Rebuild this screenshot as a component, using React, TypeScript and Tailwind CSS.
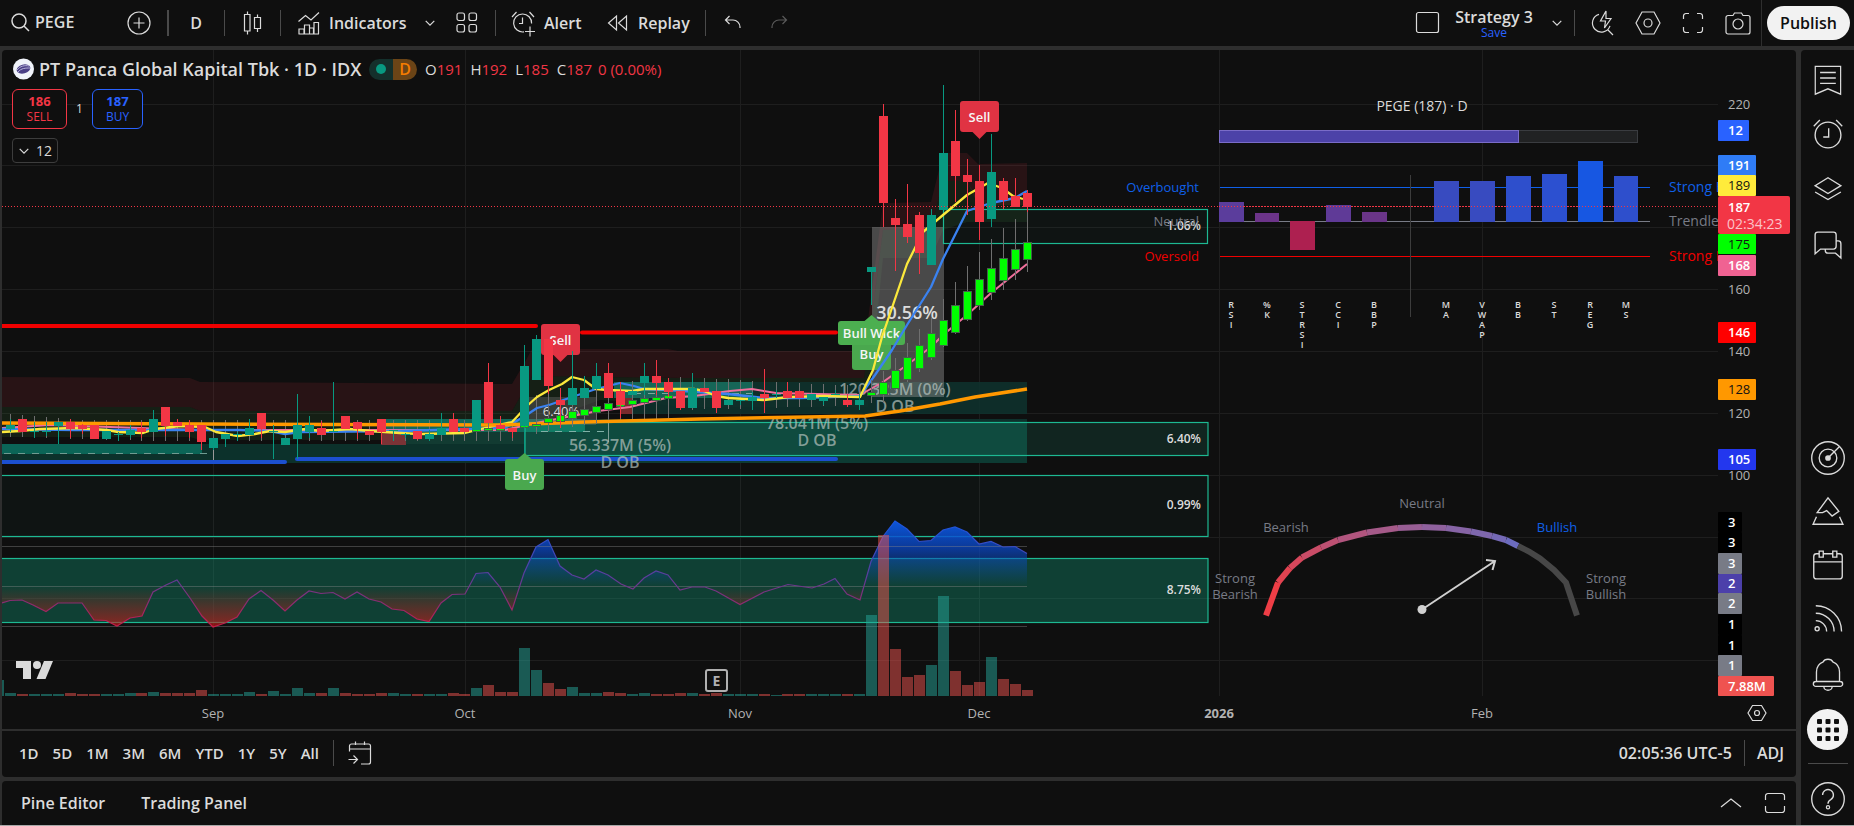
import React from "react";

const FONT = "font-['Trebuchet_MS','Open_Sans','Noto_Sans',sans-serif]";

/* ------------------------------------------------------------------ icons */

type IconProps = { size?: number; className?: string; children: React.ReactNode };

function Icon({ size = 28, className = "", children }: IconProps) {
  return (
    <svg
      width={size}
      height={size}
      viewBox="0 0 28 28"
      fill="none"
      stroke="currentColor"
      strokeWidth="1.2"
      className={"shrink-0 " + className}
      aria-hidden="true"
    >
      {children}
    </svg>
  );
}

const SearchIcon = () => (
  <Icon>
    <circle cx="13" cy="13" r="7" strokeWidth="1.5" />
    <path d="M18 18l5 5" strokeWidth="1.5" />
  </Icon>
);
const PlusCircle = () => (
  <Icon>
    <circle cx="14" cy="14" r="11" />
    <path d="M14 8.500v11M8.500 14h11" />
  </Icon>
);
const CandlesIcon = () => (
  <Icon>
    <path d="M8.500 2.500v3M8.500 22v3.500M5.500 5.500h5.500v16.500h-5.500zM18.500 5.500v3M18.500 19.500v3.500M15.500 8.500h6v11h-6z" />
  </Icon>
);
const IndicatorsIcon = () => (
  <Icon>
    <path d="M3.500 12.500l7-6 5.500 4.500 8-7.500M4 25v-5h5v5M9.500 25v-9h5v9M14.500 25v-6h4v6M19 25v-11.500h4.500V25M3.500 25h20.500" />
  </Icon>
);
const GridIcon = () => (
  <Icon>
    <rect x="4" y="4" width="7.500" height="7.500" rx="2" />
    <rect x="16" y="4" width="7.500" height="7.500" rx="2" />
    <rect x="4" y="15.500" width="7.500" height="7.500" rx="2" />
    <rect x="16" y="15.500" width="7.500" height="7.500" rx="2" />
  </Icon>
);
const AlertIcon = () => (
  <Icon>
    <path d="M21.600 14.500a9 9 0 1 0-7.600 8.400M12.500 8.500v6H9M20 17.500v10M15 22.500h10M2 8l4.500-5M19.500 3L24 8" />
  </Icon>
);
const ReplayIcon = () => (
  <Icon>
    <path d="M12.500 7v14l-8-7zM22.500 7v14l-8-7z" />
  </Icon>
);
const UndoIcon = () => (
  <Icon>
    <path d="M10.500 7L6.500 11l4 4M6.500 11h7.500a7 7 0 0 1 7 7v1" />
  </Icon>
);
const RedoIcon = () => (
  <Icon>
    <path d="M17.500 7l4 4-4 4M21.500 11H14a7 7 0 0 0-7 7v1" />
  </Icon>
);
const ChevronDown = () => (
  <Icon size={20}>
    <path d="M8 11l6 6 6-6" strokeWidth="1.7" />
  </Icon>
);
const FlashSearch = () => (
  <Icon>
    <path d="M11 5.400a9 9 0 1 0 11 11.500M20 21l5 5M18 2l-5.500 10h5l-1 7L23 9.500h-5z" />
  </Icon>
);
const HexIcon = ({ size = 28 }: { size?: number }) => (
  <Icon size={size}>
    <path d="M8 3h12l6 11-6 11H8L2 14z" />
    <circle cx="14" cy="14" r="4" />
  </Icon>
);
const FullscreenIcon = () => (
  <Icon>
    <path d="M4.500 10V7a2.500 2.500 0 0 1 2.500-2.500h3M18 4.500h3A2.500 2.500 0 0 1 23.500 7v3M23.500 18v3a2.500 2.500 0 0 1-2.500 2.500h-3M10 23.500H7A2.500 2.500 0 0 1 4.500 21v-3" />
  </Icon>
);
const CameraIcon = () => (
  <Icon>
    <path d="M4 6.500h5l1.500-2.500h7L19 6.500h5a2 2 0 0 1 2 2V23a2 2 0 0 1-2 2H4a2 2 0 0 1-2-2V8.500a2 2 0 0 1 2-2z" />
    <circle cx="14" cy="15" r="5" />
  </Icon>
);

const S = 38;
const SIDE_TOP: { label: string; icon: React.ReactNode }[] = [
  {
    label: "Watchlist",
    icon: (
      <Icon size={S}>
        <path d="M3.500 4h21v20.500l-10.500-4-10.500 4zM7.500 8.500h13M7.500 12.500h13M7.500 16.500h13" strokeWidth="1" transform="translate(1.500 0) scale(0.890 1)" />
      </Icon>
    ),
  },
  {
    label: "Alerts",
    icon: (
      <Icon size={S}>
        <circle cx="14" cy="14" r="9.500" strokeWidth="1" />
        <path d="M14.500 9v6.500h-4M3.500 7.500L8 3M20 3l4.500 4.500" strokeWidth="1" />
      </Icon>
    ),
  },
  {
    label: "Object tree",
    icon: (
      <Icon size={S}>
        <path d="M14 5l9.500 5.800-9.500 5.800-9.500-5.800zM4.500 15.500L14 21l9.500-5.500" strokeWidth="1" />
      </Icon>
    ),
  },
  {
    label: "Chats",
    icon: (
      <Icon size={S}>
        <path
          d="M6.500 4.500h11.500a2 2 0 0 1 2 2V15a2 2 0 0 1-2 2H8.500L4.500 20.500V6.500a2 2 0 0 1 2-2zM20 11h1.500a2 2 0 0 1 2 2v10.500l-4-3.500H14a2 2 0 0 1-2-2v-1"
          strokeWidth="1"
        />
      </Icon>
    ),
  },
];

const SIDE_BOTTOM: { label: string; icon: React.ReactNode }[] = [
  {
    label: "Screeners",
    icon: (
      <Icon size={S}>
        <circle cx="14" cy="14" r="12" strokeWidth="1" />
        <circle cx="14" cy="14" r="6.500" strokeWidth="1" />
        <circle cx="14" cy="14" r="1.500" fill="currentColor" />
        <path d="M14 14l8.500-8.500" strokeWidth="1" />
      </Icon>
    ),
  },
  {
    label: "Pine",
    icon: (
      <Icon size={S}>
        <path d="M6 14.500L14 3.500l8 10-5 3.500-4-4-3 1.500zM5.500 17.500L3 23h22L22.500 17.500" strokeWidth="1" />
      </Icon>
    ),
  },
  {
    label: "Calendar",
    icon: (
      <Icon size={S}>
        <path d="M7.500 5H5.500a2 2 0 0 0-2 2v14.500a2 2 0 0 0 2 2h17a2 2 0 0 0 2-2V7a2 2 0 0 0-2-2h-2M10.500 5h7M3.500 11h21M7.500 3h3v4.500h-3zM17.500 3h3v4.500h-3z" strokeWidth="1" />
      </Icon>
    ),
  },
  {
    label: "News feed",
    icon: (
      <Icon size={S}>
        <circle cx="6" cy="20.500" r="1.500" strokeWidth="1" />
        <path d="M5 14.500a8 8 0 0 1 8 8M5 9A13.500 13.500 0 0 1 18.500 22.500M5 3.500a19 19 0 0 1 19 19" strokeWidth="1" />
      </Icon>
    ),
  },
  {
    label: "Notifications",
    icon: (
      <Icon size={S}>
        <path
          d="M5.500 19.500v-7a8 8 0 0 1 5-7.500C11.500 2.500 16.500 2.500 17.500 5a8 8 0 0 1 5 7.500v7M5 19.500h18a1.800 1.800 0 0 1 0 3.600H5a1.800 1.800 0 0 1 0-3.600zM11 23.500a3 2.500 0 0 0 6 0"
          strokeWidth="1"
        />
      </Icon>
    ),
  },
];

/* ------------------------------------------------------------- chart data */

const X = (n: number) => Math.floor(10.4 + 11.963 * n);
const GREEN = "#089981";
const RED = "#f23645";

// [up, wick top, body top, body bottom, wick bottom]
type Bar = [0 | 1, number, number, number, number];
const BARS: Bar[] = [
  [1, 419, 425, 429, 432], [0, 419, 419, 432, 432], [1, 422, 431, 432, 438], [1, 422, 431, 432, 436],
  [1, 422, 422, 426, 444], [0, 419, 422, 429, 438], [0, 424, 425, 429, 434], [0, 425, 425, 439, 439],
  [1, 431, 431, 439, 439], [1, 432, 434, 435, 441], [1, 425, 430, 435, 438], [0, 422, 428, 432, 438],
  [1, 410, 419, 432, 432], [0, 407, 407, 426, 436], [0, 419, 422, 426, 426], [0, 420, 425, 432, 438],
  [0, 425, 425, 442, 450], [1, 438, 438, 448, 450], [1, 434, 434, 439, 447], [1, 432, 434, 435, 441],
  [1, 419, 428, 435, 435], [0, 413, 413, 429, 438], [1, 425, 431, 432, 459], [1, 438, 438, 445, 445],
  [1, 394, 425, 439, 459], [1, 416, 425, 432, 438], [0, 421, 428, 435, 435], [1, 382, 431, 432, 432],
  [0, 416, 416, 429, 429], [0, 422, 422, 429, 439], [0, 431, 431, 435, 435], [0, 419, 419, 432, 444],
  [1, 430, 430, 431, 441], [1, 433, 434, 435, 438], [0, 431, 431, 439, 440], [1, 430, 434, 439, 441],
  [1, 413, 428, 435, 435], [0, 413, 419, 432, 432], [0, 428, 428, 432, 432], [1, 400, 400, 430, 430],
  [0, 363, 382, 423, 423], [0, 416, 425, 429, 429], [0, 428, 428, 432, 438], [1, 345, 366, 426, 454],
  [1, 335, 339, 380, 380], [0, 339, 339, 386, 394], [0, 388, 400, 405, 428], [1, 351, 388, 405, 405],
  [1, 376, 388, 398, 398], [1, 363, 376, 389, 389], [0, 363, 373, 398, 398], [0, 382, 391, 405, 418],
  [1, 391, 391, 395, 395], [1, 363, 376, 383, 395], [0, 360, 376, 383, 395], [0, 378, 382, 392, 397],
  [0, 391, 391, 408, 410], [1, 373, 388, 408, 408], [0, 388, 388, 392, 392], [0, 391, 391, 408, 413],
  [1, 400, 400, 405, 405], [1, 400, 400, 401, 405], [1, 392, 397, 401, 410], [0, 369, 394, 398, 413],
  [1, 390, 394, 395, 398], [0, 382, 391, 398, 398], [0, 391, 391, 398, 398], [1, 394, 394, 400, 400],
  [1, 397, 397, 401, 405], [1, 390, 394, 395, 395], [0, 394, 400, 405, 407], [1, 394, 400, 405, 410],
  [1, 267, 267, 272, 305], [0, 104, 116, 203, 227], [0, 199, 218, 225, 271], [0, 184, 224, 237, 243],
  [0, 212, 215, 253, 274], [1, 209, 215, 265, 265], [1, 85, 153, 210, 210], [0, 110, 141, 176, 202],
  [0, 159, 175, 182, 215], [0, 165, 181, 222, 240], [1, 134, 172, 219, 227], [0, 178, 181, 200, 209],
  [0, 178, 196, 207, 207], [0, 190, 193, 207, 212],
];

// [bar index, wick top, body top, body bottom, wick bottom]
const TREND: [number, number, number, number, number][] = [
  [38, 420, 430, 431, 440], [39, 425, 430, 431, 438], [40, 420, 429, 430, 437], [41, 420, 429, 430, 437],
  [43, 420, 426, 427, 434], [44, 412, 425, 426, 434], [45, 405, 419, 422, 431], [46, 402, 416, 421, 428],
  [47, 396, 412, 418, 427], [48, 376, 410, 415, 424], [49, 388, 407, 412, 424], [50, 388, 404, 409, 420],
  [51, 382, 405, 406, 414], [52, 381, 401, 404, 416], [53, 380, 399, 402, 415], [54, 385, 398, 400, 414],
  [55, 378, 396, 398, 411], [72, 380, 393, 395, 403], [73, 371, 383, 394, 403], [74, 358, 371, 388, 391],
  [75, 343, 358, 379, 382], [76, 329, 346, 368, 372], [77, 317, 334, 357, 360], [78, 299, 321, 345, 347],
  [79, 282, 306, 332, 334], [80, 266, 292, 319, 321], [81, 252, 280, 305, 310], [82, 239, 269, 292, 300],
  [83, 228, 259, 280, 290], [84, 219, 250, 269, 280], [85, 207, 243, 259, 272],
];

const VOLUME =
  "3g 2r 2g 2g 2g 3r 2r 2r 2g 2g 3g 3r 4g 3r 3r 3r 6r 2g 2g 2g 4g 2r 5g 2g 8g 3g 3r 8g 3r 2r 2r 3r 3g 2g 2r 2g 2g 3r 2r 8g 11r 4r 4r 48g 26g 13r 7r 9g 3g 3g 4r 3r 2g 3g 2r 2r 3r 3g 2r 3r 2g 2g 2g 2r 1g 2r 2r 2g 2g 2g 2r 2g 81g 161r 47r 19r 21r 31g 100g 25r 11r 14r 39g 17r 12r 6r".split(
    " ",
  );

const OSC =
  "2,603 10,600.5 22,600 33,605 46,611.5 58,603 82,603 94,620 106,620.5 117,626 130,618 142,616 153,592 166,585 177,580 190,598 202,616 213,627 225,623 237,617 249,599 261,590.5 273,600 285,611 297,600 309,591 321,593.5 333,592.5 345,599 357,592 369,599 381,602 392,609 404,610.5 417,619 429,621.5 441,603 452,594.5 465,594 476,573.5 488,572.5 500,587 512,610 524,573 536,547 548,539.5 560,566 572,575 584,579 596,570 608,575 621,584 633,589 644,578 656,571 668,575 680,590 692,587 705,587 716,591 740,604.5 764,592 788,584.5 812,588 824,584 835,578.5 847,594 860,600 871,561.5 883,536.5 895,521 907,529 919,541.5 931,540.5 943,530 955,527 967,532 979,544 991,541.5 1003,547 1015,546.5 1027,553.5";

const YELLOW =
  "2,432 20,431 40,429 75,428 107,430 118,432 143,433 155,429 180,426 205,427 216,432 238,436 255,434 270,431 285,432 305,429 320,431 350,429 370,431 400,433 420,434 465,433 485,428 512,422 528,405 537,397 549,390 562,384 572,377 584,380 596,389 608,390 632,391 644,389 694,389 704,391 716,396 728,398 764,400 789,397 823,396 860,397 873,370 882,337 907,264 923,232 943,215 967,195 988,183 1002,188 1013,196 1023,199";
const BLUE =
  "2,429 75,430 140,430 180,430 240,430 270,431 285,434 300,432 400,431 505,428 528,414 537,408 549,405 572,397 596,389 620,383 634,386 644,389 668,390 728,394 764,398 801,398 860,396 875,375 892,350 907,325 931,287 943,259 967,211 991,203 1015,198 1027,191";
const PINK =
  "2,428 50,425 80,426 200,430 505,430 536,423 598,411 630,407 666,398 694,396 730,391 752,389 776,393 860,395 883,382 907,365 931,347 943,335 967,315 991,293 1027,264";

const BAND_RED =
  "2,377 190,378 200,382 512,384 525,362 532,349 668,349 678,351 864,351 883,203 931,202 939,170 943,153 967,153 978,164 1027,163 1027,205 978,205 967,181 943,181 931,228 883,230 864,378 680,378 532,376 512,411 200,411 190,407 2,407";
const BAND_GREEN =
  "2,407 190,407 200,411 512,411 532,376 680,378 864,378 883,230 931,228 943,181 967,181 978,200 1027,200 1027,222 967,222 943,230 931,258 883,258 868,407 680,407 640,402 600,400 532,425 512,440 200,440 190,437 2,437";

const GAUGE_ON: [number, number][] = [
  [1266, 615.5], [1278, 582.5], [1290, 568], [1302, 557.5], [1321, 547.5], [1338, 540], [1367, 532.5],
  [1398, 528], [1422, 527], [1446, 528], [1471, 531.5], [1492, 536], [1506, 540], [1518, 546],
];
const GAUGE_OFF = "1518,546 1529,551.5 1540,558.5 1554,570 1566,582.5 1577,615.5";

const METERS: { label: string; x: number; w: number; y: number; h: number; c: string }[] = [
  { label: "RSI", x: 1219, w: 25, y: 202, h: 20, c: "#5b3d9c" },
  { label: "%K", x: 1255, w: 24, y: 213, h: 9, c: "#6c3489" },
  { label: "STRSI", x: 1290, w: 25, y: 221, h: 29, c: "#ad2050" },
  { label: "CCI", x: 1326, w: 25, y: 205, h: 17, c: "#5f3a97" },
  { label: "BBP", x: 1362, w: 25, y: 212, h: 10, c: "#6a3588" },
  { label: "MA", x: 1434, w: 25, y: 181, h: 41, c: "#384bc0" },
  { label: "VWAP", x: 1470, w: 25, y: 181, h: 41, c: "#384bc0" },
  { label: "BB", x: 1506, w: 25, y: 176, h: 46, c: "#2e4fcc" },
  { label: "ST", x: 1542, w: 25, y: 174, h: 48, c: "#2c50d0" },
  { label: "REG", x: 1578, w: 25, y: 161, h: 61, c: "#1757e2" },
  { label: "MS", x: 1614, w: 24, y: 176, h: 46, c: "#2e4fcc" },
];

const TAGS: { t: string; y: number; h: number; w: number; bg: string; fg: string }[] = [
  { t: "12", y: 120, h: 21, w: 31, bg: "#2962ff", fg: "#fff" },
  { t: "191", y: 155, h: 21, w: 38, bg: "#2f7cf6", fg: "#fff" },
  { t: "189", y: 175, h: 21, w: 38, bg: "#ffeb3b", fg: "#131313" },
  { t: "175", y: 234, h: 20, w: 38, bg: "#00ff00", fg: "#131313" },
  { t: "168", y: 255, h: 21, w: 38, bg: "#f06292", fg: "#fff" },
  { t: "146", y: 322, h: 21, w: 38, bg: "#ff0000", fg: "#fff" },
  { t: "128", y: 379, h: 21, w: 38, bg: "#ff9800", fg: "#131313" },
  { t: "105", y: 449, h: 21, w: 38, bg: "#2337ee", fg: "#fff" },
  { t: "3", y: 512, h: 20, w: 24, bg: "#000", fg: "#fff" },
  { t: "3", y: 532, h: 21, w: 24, bg: "#000", fg: "#fff" },
  { t: "3", y: 553, h: 21, w: 24, bg: "#787b86", fg: "#fff" },
  { t: "2", y: 574, h: 19, w: 24, bg: "#4c40aa", fg: "#fff" },
  { t: "2", y: 593, h: 21, w: 24, bg: "#787b86", fg: "#fff" },
  { t: "1", y: 614, h: 21, w: 24, bg: "#000", fg: "#fff" },
  { t: "1", y: 635, h: 20, w: 24, bg: "#000", fg: "#fff" },
  { t: "1", y: 655, h: 21, w: 24, bg: "#787b86", fg: "#fff" },
  { t: "7.88M", y: 676, h: 20, w: 56, bg: "#ef5350", fg: "#fff" },
];

function gaugeColor(t: number) {
  const a = [238, 62, 70];
  const b = [150, 95, 150];
  const c = [108, 108, 190];
  const [p, q, k] = t < 0.6 ? [a, b, t / 0.6] : [b, c, (t - 0.6) / 0.4];
  return `rgb(${p.map((v, i) => Math.round(v + (q[i] - v) * k)).join(",")})`;
}

function greyWick(n: number): [number, number] {
  if (n < 43) return [414 + Math.min(n, 6), 437 + Math.min(n / 3, 4)];
  if (n < 56) return [396 - (n - 43), 430 - (n - 43)];
  return [377 + (n - 56) * 0.6, 410 - (n - 56) * 0.3];
}

/* ------------------------------------------------------------------ chart */

function Marker({ x, y, w, h, text, color, tip }: { x: number; y: number; w: number; h: number; text: string; color: string; tip?: "up" | "down" }) {
  const cx = x + w / 2;
  return (
    <g>
      <rect x={x} y={y} width={w} height={h} rx="3" fill={color} />
      {tip === "down" && <path d={`M${cx - 7} ${y + h}h14l-7 7z`} fill={color} />}
      {tip === "up" && <path d={`M${cx - 7} ${y}h14l-7-6z`} fill={color} />}
      <text x={cx} y={y + h / 2 + 5} textAnchor="middle" fontSize="13" fontWeight="600" fill="#f5f5f5">
        {text}
      </text>
    </g>
  );
}

function Chart() {
  return (
    <svg viewBox="2 50 1794 679" className="block h-full w-full" role="img" aria-label="PEGE daily price chart">
      <defs>
        <linearGradient id="oscFill" gradientUnits="userSpaceOnUse" x1="0" y1="520" x2="0" y2="630">
          <stop offset="0" stopColor="#0b5be8" stopOpacity="0.95" />
          <stop offset="0.25" stopColor="#0a48c8" stopOpacity="0.75" />
          <stop offset="0.6" stopColor="#0a50c0" stopOpacity="0" />
          <stop offset="0.605" stopColor="#d01818" stopOpacity="0" />
          <stop offset="1" stopColor="#d01818" stopOpacity="0.7" />
        </linearGradient>
        <linearGradient id="oscLine" gradientUnits="userSpaceOnUse" x1="0" y1="520" x2="0" y2="630">
          <stop offset="0" stopColor="#1757e2" />
          <stop offset="0.5" stopColor="#5b3d9c" />
          <stop offset="0.75" stopColor="#8a2c70" />
          <stop offset="1" stopColor="#d01840" />
        </linearGradient>
        <clipPath id="plot">
          <rect x="2" y="50" width="1716" height="646" />
        </clipPath>
      </defs>

      <g clipPath="url(#plot)">
        <g stroke="#1e1e1e" strokeWidth="1" shapeRendering="crispEdges">
          {[104, 165, 227, 289, 351, 413, 475, 537, 598, 660].map((y) => (
            <line key={y} x1="2" x2="1718" y1={y + 0.5} y2={y + 0.5} />
          ))}
          {[213, 465, 740, 979, 1219, 1482].map((x) => (
            <line key={x} y1="50" y2="696" x1={x + 0.5} x2={x + 0.5} />
          ))}
        </g>

        <polygon points={BAND_RED} fill="#f23645" fillOpacity="0.11" />
        <polygon points={BAND_GREEN} fill="#4caf50" fillOpacity="0.1" />

        {/* order blocks */}
        <rect x="2" y="444" width="522" height="19" fill="#0c312b" />
        <rect x="2" y="444" width="200" height="10" fill="#0b6557" />
        <line x1="4" x2="208" y1="453.5" y2="453.5" stroke="#6f9b92" strokeDasharray="7 7" />
        <rect x="381" y="432" width="144" height="12" fill="#123b32" />
        <rect x="381" y="419" width="204" height="13" fill="#12695a" />
        <rect x="381" y="432" width="25" height="13" fill="#7a3336" />
        <rect x="525" y="419" width="502" height="44" fill="#0d3b33" />
        <rect x="525" y="419" width="502" height="4" fill="#0e312c" />
        <rect x="525" y="419" width="60" height="13" fill="#10735f" />
        <rect x="620" y="382" width="407" height="32" fill="#0e312c" fillOpacity="0.9" />
        <rect x="614" y="382" width="138" height="16" fill="#17705f" fillOpacity="0.85" />
        <rect x="620" y="398" width="12" height="16" fill="#7a2a2c" />
        <rect x="529" y="397" width="67" height="28" fill="#6b6b6b" fillOpacity="0.4" />
        <rect x="872" y="227" width="72" height="170" fill="#9a9a9a" fillOpacity="0.42" />
        <line x1="541" x2="608" y1="431.5" y2="431.5" stroke="#8fb0aa" strokeDasharray="7 7" />
        <line x1="634" x2="752" y1="393.5" y2="393.5" stroke="#7fa69d" strokeDasharray="7 7" />
        <line x1="608.500" x2="608.500" y1="420" y2="442" stroke="#8a9a97" />
        <line x1="213.5" x2="213.5" y1="450" y2="462" stroke="#9a9a9a" />

        {/* projected zones */}
        <g stroke="#1db892" strokeWidth="1.200">
          <rect x="943.5" y="209.5" width="264" height="34" fill="#1db892" fillOpacity="0.03" />
          <rect x="525" y="422.5" width="683" height="33" fill="#1db892" fillOpacity="0.13" />
          <rect x="-5" y="475.5" width="1213" height="61" fill="#1db892" fillOpacity="0.03" />
          <rect x="-5" y="558.5" width="1213" height="64" fill="#12b48a" fillOpacity="0.3" />
        </g>

        {/* oscillator */}
        <polygon points={`2,586.5 ${OSC} 1027,586.5`} fill="url(#oscFill)" />
        <g stroke="#8a8a8a" strokeOpacity="0.4">
          <line x1="2" x2="1027" y1="546.5" y2="546.5" />
          <line x1="2" x2="1027" y1="586.5" y2="586.5" />
          <line x1="2" x2="1027" y1="626.5" y2="626.5" />
        </g>
        <polyline points={OSC} fill="none" stroke="url(#oscLine)" strokeWidth="1.200" />

        {/* volume */}
        <g shapeRendering="crispEdges">
          <rect x="2" y="680" width="2" height="16" fill="#26a69a" fillOpacity="0.5" />
          {VOLUME.map((v, n) => {
            const h = parseInt(v, 10);
            return (
              <rect
                key={n}
                x={X(n) - 5}
                y={696 - h}
                width="11"
                height={h}
                fill={v.endsWith("g") ? "#26a69a" : "#ef5350"}
                fillOpacity="0.5"
              />
            );
          })}
        </g>

        {/* levels */}
        <g strokeLinecap="round" strokeWidth="4">
          <line x1="2" x2="536" y1="326" y2="326" stroke="#f00000" />
          <line x1="582" x2="836" y1="332.500" y2="332.500" stroke="#f00000" />
          <line x1="2" x2="285" y1="462" y2="462" stroke="#1c4fd0" />
          <line x1="297" x2="836" y1="459" y2="459" stroke="#1c4fd0" />
        </g>

        {/* volume notes */}
        <g fill="#b8c4c0" fillOpacity="0.7" fontSize="16" fontWeight="600" textAnchor="middle">
          <text x="620" y="451">56.337M (5%)</text>
          <text x="620" y="468">D OB</text>
          <text x="817" y="429">78.041M (5%)</text>
          <text x="817" y="446">D OB</text>
          <text x="895" y="395">120.325M (0%)</text>
          <text x="895" y="412">D OB</text>
        </g>
        <text x="907" y="319" textAnchor="middle" fontSize="18" fontWeight="600" fill="#dcdcdc">30.56%</text>
        <text x="561" y="416" textAnchor="middle" fontSize="13" fill="#dcdcdc">6.40%</text>

        <Marker x={541} y={324} w={39} h={31} text="Sell" color="#e03343" tip="down" />
        <Marker x={852} y={338} w={39} h={32} text="Buy" color="#4aa84e" />
        <Marker x={838} y={321} w={67} h={24} text="Bull Wick" color="#4caf50" tip="up" />

        {/* grey wicks */}
        <g fill="#6f6f6f" shapeRendering="crispEdges">
          {BARS.slice(0, 72).map((_, n) => {
            const [a, b] = greyWick(n);
            return <rect key={n} x={X(n)} y={a} width="1" height={b - a} />;
          })}
        </g>

        {/* averages */}
        <g fill="none" strokeWidth="2" strokeLinejoin="round">
          <polyline points={PINK} stroke="#f0709c" />
          <polyline points={BLUE} stroke="#3a82f0" strokeWidth="2.300" />
          <polyline points={YELLOW} stroke="#fbe83c" strokeWidth="2.300" />
          <polyline points="2,423 200,424 500,425 585,422 700,419 865,416 900,411 940,404 975,397 1027,389" stroke="#ff9800" strokeWidth="3.500" />
        </g>

        {/* trend candles */}
        <g shapeRendering="crispEdges">
          {TREND.map(([n, a, b, c, d]) => (
            <g key={n}>
              <rect x={X(n)} y={a} width="1" height={d - a} fill="#6f6f6f" />
              <rect x={X(n) - 4} y={b - 1} width="9" height={c - b + 2} fill="#44604a" />
              <rect x={X(n) - 3} y={b} width="7" height={Math.max(1, c - b)} fill="#00ff00" />
            </g>
          ))}
        </g>

        {/* price candles */}
        <g shapeRendering="crispEdges">
          {BARS.map(([up, a, b, c, d], n) => (
            <g key={n} fill={up ? GREEN : RED}>
              <rect x={X(n)} y={a} width="1" height={d - a} />
              <rect x={X(n) - 4} y={b} width="9" height={c - b} />
            </g>
          ))}
        </g>

        <Marker x={960} y={101} w={39} h={31} text="Sell" color="#e03343" tip="down" />
        <Marker x={505} y={459} w={39} h={31} text="Buy" color="#4aa84e" tip="up" />

        <line x1="2" x2="1718" y1="206.5" y2="206.5" stroke={RED} strokeDasharray="1 2" />

        <g fontSize="12" fontWeight="600" fill="#dcdcdc" textAnchor="end">
          <text x="1201" y="230">1.06%</text>
          <text x="1201" y="443">6.40%</text>
          <text x="1201" y="509">0.99%</text>
          <text x="1201" y="594">8.75%</text>
        </g>

        {/* earnings marker */}
        <rect x="706" y="670" width="21" height="21" rx="2" fill="#0f0f0f" stroke="#b0b0b0" strokeWidth="2" />
        <text x="716.5" y="686" textAnchor="middle" fontSize="14" fontWeight="700" fill="#b0b0b0">E</text>

        {/* logo */}
        <g fill="#dbdbdb">
          <path d="M16 661h15v18h-8v-11h-7z" />
          <circle cx="37" cy="665" r="4" />
          <path d="M44 661h9l-7.500 18h-9z" />
        </g>

        {/* indicator summary */}
        <text x="1422" y="111" textAnchor="middle" fontSize="14" fill="#dbdbdb">PEGE (187) · D</text>
        <rect x="1219.500" y="130.500" width="418" height="12" fill="#212223" stroke="#3a3c40" />
        <rect x="1219.500" y="130.500" width="299" height="12" fill="#4c42a8" stroke="#7a6cc8" />
        <line x1="1220" x2="1650" y1="187.5" y2="187.5" stroke="#1060e8" />
        <line x1="1220" x2="1650" y1="221.5" y2="221.5" stroke="#787b86" />
        <line x1="1220" x2="1650" y1="256.5" y2="256.5" stroke="#f00000" />
        <line x1="1410.5" x2="1410.5" y1="175" y2="317" stroke="#3c3c3c" />
        {METERS.map((m) => (
          <g key={m.label}>
            <rect x={m.x} y={m.y} width={m.w} height={m.h} fill={m.c} />
            <g fontSize="9" fontWeight="600" fill="#dbdbdb" textAnchor="middle">
              {m.label.split("").map((ch, i) => (
                <text key={i} x={m.x + 12} y={308 + i * 10}>{ch}</text>
              ))}
            </g>
          </g>
        ))}
        <line x1="1219" x2="1638" y1="206.5" y2="206.5" stroke={RED} strokeDasharray="1 2" />
        <g fontSize="13">
          <g textAnchor="end">
            <text x="1199" y="192" fill="#1060e8">Overbought</text>
            <text x="1199" y="226" fill="#787b86">Neutral</text>
            <text x="1199" y="261" fill="#f00000">Oversold</text>
          </g>
        </g>
        <g fontSize="14">
          <text x="1669" y="192" fill="#1060e8">Strong B</text>
          <text x="1669" y="226" fill="#787b86">Trendle</text>
          <text x="1669" y="261" fill="#f00000">Strong B</text>
        </g>

        {/* gauge */}
        {GAUGE_ON.slice(1).map(([x, y], i) => (
          <line
            key={i}
            x1={GAUGE_ON[i][0]}
            y1={GAUGE_ON[i][1]}
            x2={x}
            y2={y}
            stroke={gaugeColor(i / 12)}
            strokeWidth="6"
          />
        ))}
        <polyline points={GAUGE_OFF} fill="none" stroke="#474747" strokeWidth="6" />
        <path d="M1422 609.500L1495 561M1486 560l9 1-2.500 9" fill="none" stroke="#d0d0d0" strokeWidth="2" />
        <circle cx="1422" cy="609.500" r="4.500" fill="#d0d0d0" />
        <g fontSize="13" fill="#787b86" textAnchor="middle">
          <text x="1422" y="508">Neutral</text>
          <text x="1286" y="532">Bearish</text>
          <text x="1557" y="532" fill="#1060e8">Bullish</text>
          <text x="1235" y="583">Strong</text>
          <text x="1235" y="599">Bearish</text>
          <text x="1606" y="583">Strong</text>
          <text x="1606" y="599">Bullish</text>
        </g>
      </g>

      {/* price axis */}
      <g fontSize="13" fill="#b2b2b2">
        <text x="1728" y="109">220</text>
        <text x="1728" y="294">160</text>
        <text x="1728" y="356">140</text>
        <text x="1728" y="418">120</text>
        <text x="1728" y="480">100</text>
      </g>
      {TAGS.map((t, i) => (
        <g key={i}>
          <rect x="1718" y={t.y} width={t.w} height={t.h} rx="1" fill={t.bg} />
          <text x="1728" y={Math.floor(t.y + t.h / 2 + 5)} fontSize="13" fontWeight={t.fg === "#fff" ? 600 : 400} fill={t.fg}>
            {t.t}
          </text>
        </g>
      ))}
      <rect x="1718" y="196" width="72" height="38" rx="2" fill="#f23645" />
      <text x="1728" y="212" fontSize="13" fontWeight="600" fill="#fff">187</text>
      <text x="1727" y="229" fontSize="14" fill="#fbc4c9">02:34:23</text>

      {/* time axis */}
      <g fontSize="13" fill="#b2b2b2" textAnchor="middle">
        <text x="213" y="718">Sep</text>
        <text x="465" y="718">Oct</text>
        <text x="740" y="718">Nov</text>
        <text x="979" y="718">Dec</text>
        <text x="1219" y="718" fontWeight="700">2026</text>
        <text x="1482" y="718">Feb</text>
      </g>
      <g fill="none" stroke="#dbdbdb" strokeWidth="1.200">
        <path d="M1752.500 705.500h9l4.500 7.500-4.500 7.500h-9l-4.500-7.500z" />
        <circle cx="1757" cy="713" r="2.500" />
      </g>
    </svg>
  );
}

/* ----------------------------------------------------------------- layout */

const Sep = () => <span className="h-[26px] w-px shrink-0 bg-[#4a4a4a]" />;

function TopBar() {
  return (
    <header className="flex h-[46px] shrink-0 items-center bg-[#0f0f0f] text-base font-semibold text-[#dbdbdb]">
      <button className="flex w-[118px] items-center pb-0.5 pl-1.5">
        <SearchIcon />
        <span className="pl-px">PEGE</span>
      </button>
      <button aria-label="Compare symbols" className="flex w-[42px] justify-center"><PlusCircle /></button>
      <span className="mx-[7px] h-[26px] w-0.5 bg-[#4a4a4a]" />
      <button className="w-10 text-center">D</button>
      <span className="w-2" />
      <Sep />
      <button aria-label="Bar style" className="flex w-[55px] justify-center"><CandlesIcon /></button>
      <Sep />
      <button className="flex w-[132px] items-center gap-1.5 pl-[14px]"><IndicatorsIcon />Indicators</button>
      <button aria-label="Indicator favorites" className="flex w-[34px] justify-center"><ChevronDown /></button>
      <button aria-label="Indicator templates" className="flex w-[48px] justify-center pr-2"><GridIcon /></button>
      <Sep />
      <button className="flex w-[100px] items-center gap-1.5 pl-[14px]"><AlertIcon />Alert</button>
      <button className="flex w-[109px] items-center gap-1.5 pl-2"><ReplayIcon />Replay</button>
      <Sep />
      <button aria-label="Undo" className="flex w-[54px] justify-center"><UndoIcon /></button>
      <button aria-label="Redo" className="flex w-[38px] justify-center text-[#5a5a5a]"><RedoIcon /></button>

      <div className="ml-auto flex h-full items-center">
        <button aria-label="Layout setup" className="flex w-10 justify-center">
          <Icon><rect x="2.500" y="3.500" width="22" height="20" rx="2" /></Icon>
        </button>
        <button className="flex w-[92px] flex-col items-center">
          <span className="leading-5">Strategy 3</span>
          <span className="text-xs leading-3 font-normal text-[#2962ff]">Save</span>
        </button>
        <button aria-label="Manage layouts" className="flex w-[34px] justify-center"><ChevronDown /></button>
        <Sep />
        <button aria-label="Quick search" className="flex w-[54px] justify-center"><FlashSearch /></button>
        <button aria-label="Settings" className="flex w-[38px] justify-center"><HexIcon /></button>
        <button aria-label="Fullscreen" className="flex w-[52px] justify-center"><FullscreenIcon /></button>
        <button aria-label="Take a snapshot" className="flex w-[38px] justify-center"><CameraIcon /></button>
        <span className="ml-1 h-full w-px bg-[#2e2e2e]" />
        <button className="mr-1 ml-[5px] h-[34px] w-[83px] rounded-full bg-[#f2f2f2] text-center text-[#0f0f0f]">Publish</button>
      </div>
    </header>
  );
}

function Legend() {
  return (
    <div className="absolute top-2 left-[10px] flex flex-col items-start text-[#dbdbdb]">
      <div className="flex h-[22px] items-center">
        <svg width="22" height="22" viewBox="0 0 22 22" aria-hidden="true">
          <circle cx="11.500" cy="11" r="10.500" fill="#f0f3fa" />
          <ellipse cx="11.500" cy="11" rx="7" ry="4.500" fill="#4a3f86" transform="rotate(-15 11.500 11)" />
          <path d="M5 12c3-4 8-5 12-4M6 14c3-4 8-4 12-4" stroke="#b9b4dc" fill="none" />
        </svg>
        <h1 className="ml-[5px] w-[330px] text-[18px] font-semibold whitespace-nowrap">PT Panca Global Kapital Tbk · 1D · IDX</h1>
        <span className="flex h-[21px] overflow-hidden rounded-full">
          <span className="flex w-6 items-center justify-center bg-[#14302c]"><span className="size-[10px] rounded-full bg-[#089981]" /></span>
          <span className="flex w-6 items-center justify-center bg-[#6b4416] text-base font-semibold text-[#f57c00]">D</span>
        </span>
        <p className="ml-2 flex gap-2 text-[15px] whitespace-nowrap">
          <span>O<span className="text-[#f23645]">191</span></span>
          <span>H<span className="text-[#f23645]">192</span></span>
          <span>L<span className="text-[#f23645]">185</span></span>
          <span>C<span className="text-[#f23645]">187</span></span>
          <span className="-ml-0.5 text-[#f23645]">0 (0.00%)</span>
        </p>
      </div>
      <div className="mt-[9px] flex items-center text-xs leading-4">
        <button className="h-10 w-[55px] rounded-md border border-[#f23645] bg-[#0f0f0f] text-[#f23645]">
          <span className="block text-[13px] leading-4 font-bold">186</span>SELL
        </button>
        <span className="w-[25px] text-center">1</span>
        <button className="h-10 w-[51px] rounded-md border border-[#2962ff] bg-[#0f0f0f] text-[#2962ff]">
          <span className="block text-[13px] leading-4 font-bold">187</span>BUY
        </button>
      </div>
      <button className="mt-[9px] flex h-[25px] w-[46px] items-center rounded-sm border border-[#3d3d3d] bg-[#0f0f0f] pl-px text-sm font-medium">
        <ChevronDown />
        <span className="pl-0.5">12</span>
      </button>
    </div>
  );
}

function RangeBar() {
  return (
    <div className="flex h-[46px] shrink-0 items-center px-3 pb-0.5 text-[15px] font-semibold text-[#dbdbdb]">
      <div className="flex gap-[14px] pl-[5px]">
        {["1D", "5D", "1M", "3M", "6M", "YTD", "1Y", "5Y", "All"].map((r) => (
          <button key={r}>{r}</button>
        ))}
      </div>
      <span className="ml-[14px] h-[26px] w-px bg-[#4a4a4a]" />
      <button aria-label="Go to date" className="ml-3">
        <Icon>
          <path d="M3.500 12.500V7a2 2 0 0 1 2-2h17a2 2 0 0 1 2 2v16a2 2 0 0 1-2 2H15M3.500 10h21M9.500 2.500V6M18.500 2.500V6M2.500 20.500h9M7.500 16.500l4 4-4 4" />
        </Icon>
      </button>
      <button className="ml-auto text-base">02:05:36 UTC-5</button>
      <span className="mx-3 h-[26px] w-px bg-[#4a4a4a]" />
      <button className="text-base">ADJ</button>
    </div>
  );
}

function SideBar() {
  return (
    <nav className="flex w-[53px] shrink-0 flex-col items-center rounded-tl-sm bg-[#0f0f0f] pt-0.5 text-[#dbdbdb]">
      {SIDE_TOP.map((i) => (
        <button key={i.label} aria-label={i.label} className="flex h-[55px] items-center justify-center">{i.icon}</button>
      ))}
      <div className="mt-auto flex flex-col items-center">
        {SIDE_BOTTOM.map((i) => (
          <button key={i.label} aria-label={i.label} className="flex h-[54px] items-center justify-center">{i.icon}</button>
        ))}
        <button aria-label="Products" className="mt-2 flex size-[41px] items-center justify-center rounded-full bg-[#f2f2f2]">
          <svg width="22" height="22" viewBox="0 0 22 22" fill="#0f0f0f" aria-hidden="true">
            {[0, 8.5, 17].map((y) => [0, 8.5, 17].map((x) => <rect key={x + "-" + y} x={x} y={y} width="5" height="5" rx="1" />))}
          </svg>
        </button>
        <span className="mt-[13px] mb-4 h-px w-10 bg-[#4a4a4a]" />
        <button aria-label="Help" className="mb-[7px]">
          <Icon size={S}>
            <circle cx="14" cy="14" r="12" strokeWidth="1" />
            <path d="M10 11a4 4 0 1 1 6 3.500c-1.500.8-2 1.500-2 3" strokeWidth="1" />
            <circle cx="14" cy="20" r="1.200" strokeWidth="0.900" />
          </Icon>
        </button>
      </div>
    </nav>
  );
}

export default function App() {
  return (
    <div className={"flex h-screen flex-col border-b border-[#a8a8a8] bg-[#2e2e2e] " + FONT}>
      <TopBar />
      <div className="mt-1 flex min-h-0 flex-1 gap-[5px]">
        <div className="flex min-w-0 flex-1 flex-col gap-1 pl-0.5">
          <main className="flex min-h-0 flex-1 flex-col overflow-hidden rounded bg-[#0f0f0f]">
            <section className="relative min-h-0 flex-1">
              <Chart />
              <Legend />
            </section>
            <div className="h-0.5 shrink-0 bg-[#2e2e2e]" />
            <RangeBar />
          </main>
          <footer className="flex h-11 shrink-0 items-center rounded-t bg-[#0f0f0f] px-[19px] text-base font-semibold text-[#dbdbdb]">
            <button>Pine Editor</button>
            <button className="ml-9">Trading Panel</button>
            <button aria-label="Open panel" className="mr-4 ml-auto">
              <Icon><path d="M4 18l10-8 10 8" strokeWidth="1.300" /></Icon>
            </button>
            <button aria-label="Maximize panel" className="-mr-3">
              <Icon><path d="M4.500 11V7A2.500 2.500 0 0 1 7 4.500h14A2.500 2.500 0 0 1 23.500 7v4M23.500 17v4a2.500 2.500 0 0 1-2.500 2.500H7A2.500 2.500 0 0 1 4.500 21v-4" /></Icon>
            </button>
          </footer>
        </div>
        <SideBar />
      </div>
    </div>
  );
}
